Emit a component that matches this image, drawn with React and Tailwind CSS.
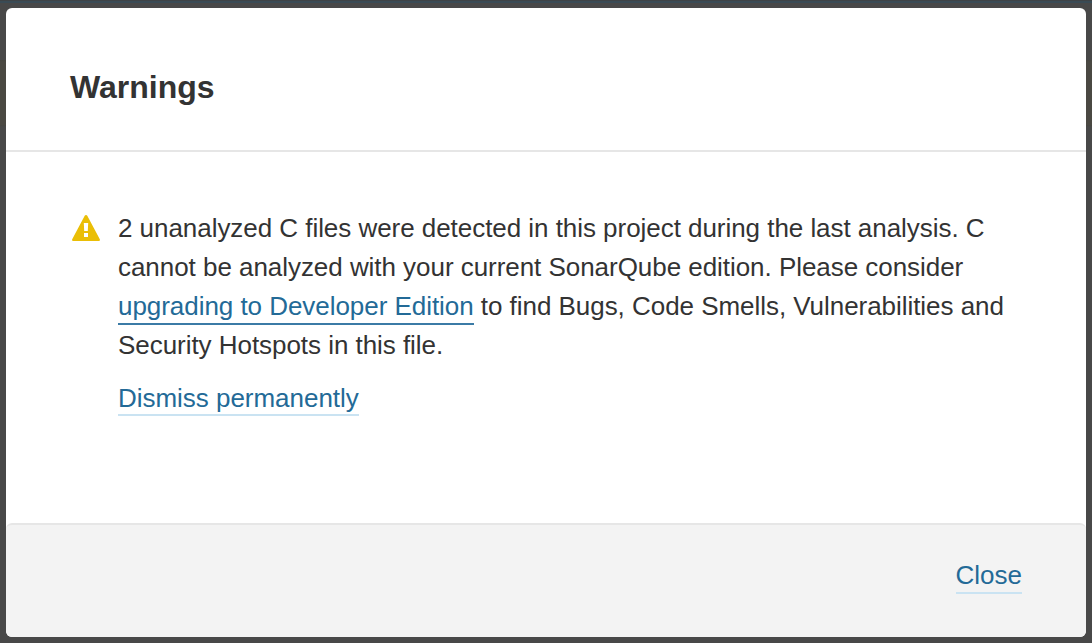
export default function App() {
  return (
    <div className="h-[643px] w-[1092px] overflow-hidden bg-[linear-gradient(to_bottom,#3e4346_0,#3e4346_1px,#3a4b55_1px,#3a4b55_3px,#484848_3px,#484848_60px,#474640_60px,#4a4842_62px,#4a4842_125px,#474640_125px,#484848_127px)] px-[6px] pt-2 pb-[6px] font-['Liberation_Sans',sans-serif] text-[#333333]">
      <section role="dialog" className="flex h-[629px] flex-col overflow-hidden rounded-[6px] bg-white">
        <header className="h-36 shrink-0 border-b-2 border-[#e6e6e6] px-16 pt-[59px]">
          <h1 className="text-[32px] leading-[40px] font-bold">Warnings</h1>
        </header>
        <main className="flex flex-1 px-16 pt-[57px]">
          <svg className="mt-[3px] mr-4 h-8 w-8 shrink-0" viewBox="0 0 32 32">
            <path fill="#eabe06" d="M14.7 3.7a1.5 1.5 0 0 1 2.6 0L29.8 27.2a1.3 1.3 0 0 1-1.2 1.9H3.4a1.3 1.3 0 0 1-1.2-1.9z" />
            <path fill="#fff" d="M13.8 11h4.4l-.4 8h-3.6zM14 21h4v4h-4z" />
          </svg>
          <div className="text-[26px] leading-[39px] tracking-[-0.045px] whitespace-nowrap">
            <p>
              2 unanalyzed C files were detected in this project during the last analysis. C<br />
              cannot be analyzed with your current SonarQube edition. Please consider<br />
              <a className="border-b-2 border-[#3b7ba6] pb-[2px] text-[#236a97]">upgrading to Developer Edition</a> to find Bugs, Code Smells, Vulnerabilities and<br />
              Security Hotspots in this file.
            </p>
            <div className="mt-[14px]"><button className="border-b-2 border-[#cae3f2] leading-[32px] tracking-[-0.03px] text-[#236a97]">Dismiss permanently</button></div>
          </div>
        </main>
        <footer className="flex h-[114px] shrink-0 justify-end rounded-t-[6px] border-t-2 border-[#e6e6e6] bg-[#f3f3f3] px-16 pt-[33px]">
          <button className="h-9 border-b-2 border-[#cae3f2] text-[26px] leading-[34px] text-[#236a97]">Close</button>
        </footer>
      </section>
    </div>
  );
}
